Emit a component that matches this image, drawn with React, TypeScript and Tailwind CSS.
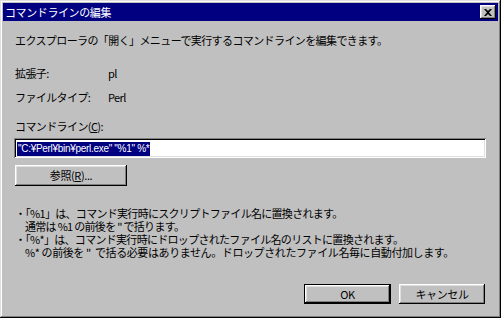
import React from 'react';

const jp = { fontFamily: '"Noto Sans CJK JP", "Liberation Sans", sans-serif' };
const raised =
  'shadow-[inset_-1px_-1px_#000,inset_1px_1px_#fff,inset_-2px_-2px_#808080,inset_2px_2px_#dfdfdf]';

const Win98Button: React.FC<{ label: React.ReactNode; primary?: boolean; className?: string }> = ({
  label,
  primary,
  className,
}) => (
  <div className={`${primary ? 'border border-black' : ''} ${className ?? ''}`}>
    <button
      className={`w-full h-full bg-[#c0c0c0] ${raised} text-[11px] tracking-[-0.4px] text-black flex items-center justify-center`}
    >
      {label}
    </button>
  </div>
);

const App: React.FC = () => {
  return (
    <div style={jp} className="w-[501px] h-[318px] bg-[#c0c0c0] text-black">
      <div className="w-full h-full p-[3px] flex flex-col shadow-[inset_-1px_-1px_#000,inset_1px_1px_#dfdfdf,inset_-2px_-2px_#808080,inset_2px_2px_#fff]">
        {/* Title bar */}
        <div className="h-[18px] bg-[#000080] flex items-center justify-between pl-[2px] pr-[2px]">
          <span className="text-white text-[11px] tracking-[-0.4px] leading-none">コマンドラインの編集</span>
          <div className={`w-[16px] h-[14px] bg-[#c0c0c0] ${raised} flex items-center justify-center`}>
            <svg width="8" height="7" viewBox="0 0 8 7">
              <path d="M0 0h2l2 2 2-2h2L5 3.5 8 7H6L4 5 2 7H0l3-3.5z" fill="#000" />
            </svg>
          </div>
        </div>

        {/* Body */}
        <div className="flex-1 flex flex-col px-[11px] text-[11px] tracking-[-0.6px] leading-[13px]">
          <p className="mt-[13px] ml-[1px] h-[13px]">
            エクスプローラの「開く」メニューで実行するコマンドラインを編集できます。
          </p>

          <div className="mt-[20px] ml-[1px] h-[13px] flex">
            <span className="w-[93px]">拡張子:</span>
            <span>pl</span>
          </div>
          <div className="mt-[11px] ml-[1px] h-[13px] flex">
            <span className="w-[93px]">ファイルタイプ:</span>
            <span>Perl</span>
          </div>

          <p className="mt-[16px] ml-[1px] h-[13px]">
            コマンドライン(<span className="underline">C</span>):
          </p>

          <div className="mt-[5px] w-[472px] h-[20px] bg-white shadow-[inset_1px_1px_#808080,inset_-1px_-1px_#fff,inset_2px_2px_#000,inset_-2px_-2px_#dfdfdf] pl-[3px] pt-[3px]">
            <span
              style={{ fontFamily: '"Liberation Sans", sans-serif' }}
              className="inline-block bg-[#000080] text-white text-[10px] tracking-[-0.3px] leading-[14px] h-[14px] px-[1px] whitespace-pre"
            >
              {'"C:¥Perl¥bin¥perl.exe" "%1" %*'}
            </span>
          </div>

          <Win98Button
            className="mt-[7px] ml-[1px] w-[112px] h-[21px]"
            label={
              <span>
                参照(<span className="underline">R</span>)...
              </span>
            }
          />

          {/* Notes */}
          <div className="mt-[21px] ml-[1px] text-[11px] tracking-[-0.7px] leading-[13px] whitespace-pre">
            <p className="h-[13px]">・「%1」は、コマンド実行時にスクリプトファイル名に置換されます。</p>
            <p className="h-[13px] pl-[10px]">通常は %1 の前後を " で括ります。</p>
            <p className="h-[13px]">・「%*」は、コマンド実行時にドロップされたファイル名のリストに置換されます。</p>
            <p className="h-[13px] pl-[10px] tracking-[-0.4px]">
              %* の前後を "  で括る必要はありません。ドロップされたファイル名毎に自動付加します。
            </p>
          </div>

          <div className="mt-[25px] flex justify-end gap-[8px] pr-[2px]">
            <Win98Button primary className="w-[87px] h-[20px]" label="OK" />
            <Win98Button className="w-[86px] h-[20px]" label="キャンセル" />
          </div>
        </div>
      </div>
    </div>
  );
};

export default App;
